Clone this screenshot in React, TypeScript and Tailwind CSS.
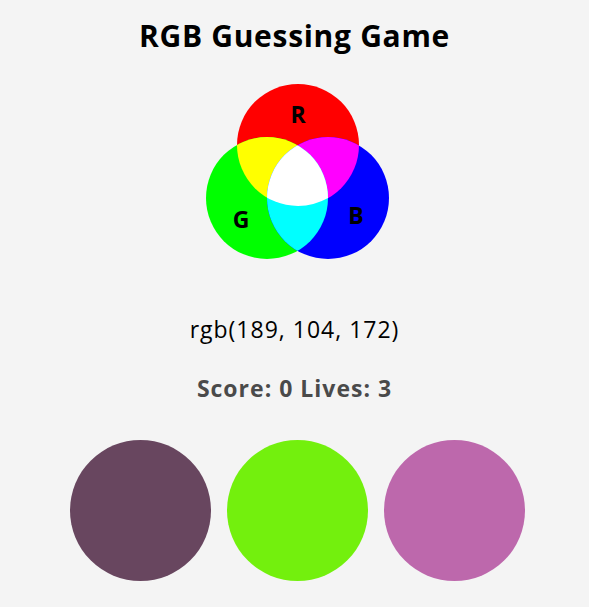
import React from "react";

const options = ["rgb(104, 70, 95)", "rgb(115, 240, 13)", "rgb(189, 104, 172)"];

function Venn() {
  return (
    <svg width="184" height="176" viewBox="0 0 184 176">
      <defs>
        <clipPath id="r"><circle cx="92" cy="61" r="61" /></clipPath>
        <clipPath id="g"><circle cx="61" cy="114" r="61" /></clipPath>
        <clipPath id="rg" clipPath="url(#r)"><circle cx="61" cy="114" r="61" /></clipPath>
      </defs>
      <circle cx="92" cy="61" r="61" fill="#ff0000" />
      <circle cx="61" cy="114" r="61" fill="#00ff00" />
      <circle cx="122" cy="114" r="61" fill="#0000ff" />
      <circle cx="61" cy="114" r="61" fill="#ffff00" clipPath="url(#r)" />
      <circle cx="122" cy="114" r="61" fill="#ff00ff" clipPath="url(#r)" />
      <circle cx="122" cy="114" r="61" fill="#00ffff" clipPath="url(#g)" />
      <circle cx="122" cy="114" r="61" fill="#ffffff" clipPath="url(#rg)" />
      <g fontFamily="'Open Sans', sans-serif" fontWeight="700" fontSize="23" fill="#000" textAnchor="middle">
        <text x="92" y="39">R</text>
        <text x="35" y="144">G</text>
        <text x="150" y="140">B</text>
      </g>
    </svg>
  );
}

export default function App() {
  return (
    <div className="min-h-[607px] w-full bg-[#f4f4f4] font-['Open_Sans',sans-serif] text-center">
      <h1 className="pt-[17px] text-[30px] font-bold text-black leading-[38px] tracking-[0.7px]">RGB Guessing Game</h1>
      <div className="mt-[29px] flex justify-center pl-[6px]">
        <Venn />
      </div>
      <p className="mt-[55px] text-[23px] text-black leading-[29px] tracking-[1px]">rgb(189, 104, 172)</p>
      <p className="mt-[30px] text-[23px] font-bold text-[#4a4a4a] leading-[29px] tracking-[1px]">Score: 0 Lives: 3</p>
      <div className="mt-[37px] flex justify-center gap-[16px] pl-[6px]">
        {options.map((c, i) => (
          <div key={i} className="h-[141px] w-[141px] rounded-full" style={{ backgroundColor: c }} />
        ))}
      </div>
    </div>
  );
}
